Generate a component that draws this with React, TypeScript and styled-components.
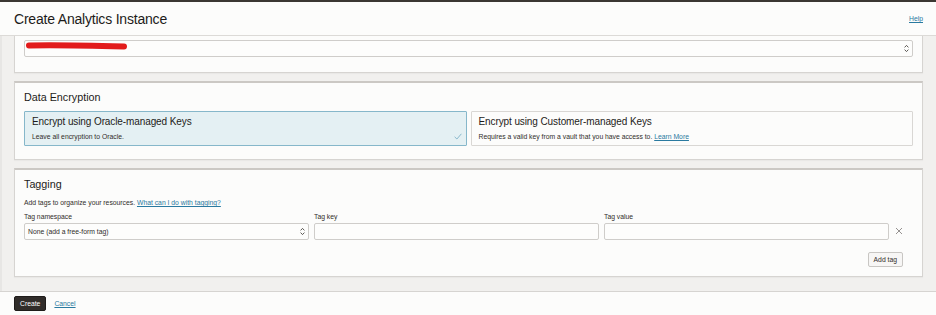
import React from "react";
import styled, { createGlobalStyle } from "styled-components";

const Global = createGlobalStyle`
  html, body { margin: 0; padding: 0; }
  body {
    background: #f1f0ee;
    font-family: "Liberation Sans", Arial, sans-serif;
    color: #312d2a;
  }
  * { box-sizing: border-box; }
`;

const Page = styled.div`
  width: 936px;
  height: 315px;
  display: flex;
  flex-direction: column;
  overflow: hidden;
  border-top: 2px solid #3b3733;
`;

const Header = styled.header`
  height: 34px;
  flex: none;
  background: #fcfcfb;
  border-bottom: 1px solid #dcdad7;
  display: flex;
  align-items: center;
  justify-content: space-between;
  padding: 0 13px 0 14px;
`;

const Title = styled.h1`
  margin: 0;
  font-size: 14px;
  letter-spacing: -0.2px;
  font-weight: 400;
  color: #1d1b19;
  line-height: 14px;
`;

const Link = styled.a`
  color: #2a7aa0;
  text-decoration: underline;
  font-size: 6.8px;
  cursor: pointer;
`;

const Body = styled.main`
  flex: 1;
  overflow: hidden;
  display: flex;
  flex-direction: column;
  gap: 8px;
  padding: 0 13px 0 12px;
  border-left: 2px solid #e7e6e4;
`;

const Card = styled.section<{ $clipped?: boolean; $pb?: number }>`
  flex: none;
  background: #fcfcfb;
  border: 1px solid #d6d4d1;
  border-top: ${(p) => (p.$clipped ? "0" : "2px solid #cbc8c4")};
  box-shadow: 0 1px 1px rgba(0, 0, 0, 0.03);
  padding: ${(p) => (p.$clipped ? "4px" : "8px")} 9px ${(p) => p.$pb ?? 13}px;
`;

const CardTitle = styled.h2`
  margin: 0;
  font-size: 10.75px;
  font-weight: 400;
  line-height: 13px;
  color: #1d1b19;
`;

const SelectBox = styled.div`
  position: relative;
  height: 17px;
  border: 1px solid #cfcdca;
  border-radius: 2px;
  background: #fdfdfc;
  display: flex;
  align-items: center;
  padding: 0 3px 0 3px;
  font-size: 6.8px;
  color: #312d2a;
`;

const SelectText = styled.span`
  flex: 1;
`;

const Scribble = styled.svg`
  position: absolute;
  left: 1px;
  top: 0px;
`;

const Options = styled.div`
  display: grid;
  grid-template-columns: 1fr 1fr;
  gap: 4px;
  margin-top: 7px;
`;

const Option = styled.div<{ $selected?: boolean }>`
  position: relative;
  height: 35px;
  border: 1px solid ${(p) => (p.$selected ? "#86b7ca" : "#d9d7d4")};
  background: ${(p) => (p.$selected ? "#e4f0f3" : "#fcfcfb")};
  border-radius: 1px;
  padding: 4px 7px 0;
`;

const OptionTitle = styled.div`
  font-size: 10px;
  letter-spacing: -0.1px;
  line-height: 12px;
  color: #1d1b19;
`;

const OptionSub = styled.div`
  margin-top: 5px;
  font-size: 6.8px;
  color: #312d2a;
  line-height: 8px;
`;

const Check = styled.svg`
  position: absolute;
  right: 4px;
  bottom: 5px;
`;

const Desc = styled.p`
  margin: 8px 0 0;
  font-size: 6.8px;
  line-height: 8px;
`;

const TagGrid = styled.div`
  display: grid;
  grid-template-columns: 1fr 1fr 1fr 19px;
  column-gap: 5px;
  margin-top: 6px;
`;

const Field = styled.div`
  display: flex;
  flex-direction: column;
  gap: 2px;
`;

const Label = styled.label`
  font-size: 6.8px;
  line-height: 8px;
  color: #312d2a;
`;

const Input = styled.div`
  height: 17px;
  border: 1px solid #cfcdca;
  border-radius: 2px;
  background: #fdfdfc;
`;

const RemoveCell = styled.div`
  display: flex;
  align-items: flex-end;
  justify-content: flex-start;
  padding: 0 0 5px 1px;
`;

const Actions = styled.div`
  display: flex;
  justify-content: flex-end;
  margin-top: 12px;
  padding-right: 10px;
`;

const SecondaryButton = styled.button`
  height: 15px;
  padding: 0 5px;
  font-family: inherit;
  font-size: 6.8px;
  color: #312d2a;
  background: #f7f6f5;
  border: 1px solid #c8c6c3;
  border-radius: 2px;
`;

const Footer = styled.footer`
  height: 24px;
  flex: none;
  background: #fcfcfb;
  border-top: 1px solid #d6d4d1;
  display: flex;
  align-items: center;
  gap: 8px;
  padding: 0 14px;
`;

const PrimaryButton = styled.button`
  height: 15px;
  padding: 0 5px;
  font-family: inherit;
  font-size: 6.8px;
  color: #fff;
  background: #312d2a;
  border: 1px solid #1f1c1a;
  border-radius: 2px;
`;

const Arrows = () => (
  <svg width="5" height="9" viewBox="0 0 5 9" fill="none" stroke="#4a4642" strokeWidth="0.9">
    <path d="M0.6 3.4 L2.5 1.4 L4.4 3.4" />
    <path d="M0.6 5.6 L2.5 7.6 L4.4 5.6" />
  </svg>
);

export default function App() {
  return (
    <>
      <Global />
      <Page>
        <Header>
          <Title>Create Analytics Instance</Title>
          <Link>Help</Link>
        </Header>
        <Body>
          <Card $clipped $pb={15}>
            <SelectBox>
              <SelectText>&nbsp;</SelectText>
              <Arrows />
              <Scribble width="104" height="12" viewBox="0 0 104 12">
                <path
                  d="M3 4.5 C 25 4, 60 4.5, 98 5.5"
                  stroke="#e21b1b"
                  strokeWidth="6"
                  strokeLinecap="round"
                  fill="none"
                />
              </Scribble>
            </SelectBox>
          </Card>

          <Card>
            <CardTitle>Data Encryption</CardTitle>
            <Options>
              <Option $selected>
                <OptionTitle>Encrypt using Oracle-managed Keys</OptionTitle>
                <OptionSub>Leave all encryption to Oracle.</OptionSub>
                <Check width="8" height="7" viewBox="0 0 8 7" fill="none" stroke="#7fb2c7" strokeWidth="0.9">
                  <path d="M0.6 3.8 L2.9 6 L7.4 0.8" />
                </Check>
              </Option>
              <Option>
                <OptionTitle>Encrypt using Customer-managed Keys</OptionTitle>
                <OptionSub>
                  Requires a valid key from a vault that you have access to. <Link>Learn More</Link>
                </OptionSub>
              </Option>
            </Options>
          </Card>

          <Card $pb={9}>
            <CardTitle>Tagging</CardTitle>
            <Desc>
              Add tags to organize your resources. <Link>What can I do with tagging?</Link>
            </Desc>
            <TagGrid>
              <Field>
                <Label>Tag namespace</Label>
                <SelectBox>
                  <SelectText>None (add a free-form tag)</SelectText>
                  <Arrows />
                </SelectBox>
              </Field>
              <Field>
                <Label>Tag key</Label>
                <Input />
              </Field>
              <Field>
                <Label>Tag value</Label>
                <Input />
              </Field>
              <RemoveCell>
                <svg width="8" height="8" viewBox="0 0 8 8" stroke="#8a8683" strokeWidth="0.9">
                  <path d="M1 1 L7 7 M7 1 L1 7" />
                </svg>
              </RemoveCell>
            </TagGrid>
            <Actions>
              <SecondaryButton>Add tag</SecondaryButton>
            </Actions>
          </Card>
        </Body>
        <Footer>
          <PrimaryButton>Create</PrimaryButton>
          <Link>Cancel</Link>
        </Footer>
      </Page>
    </>
  );
}
